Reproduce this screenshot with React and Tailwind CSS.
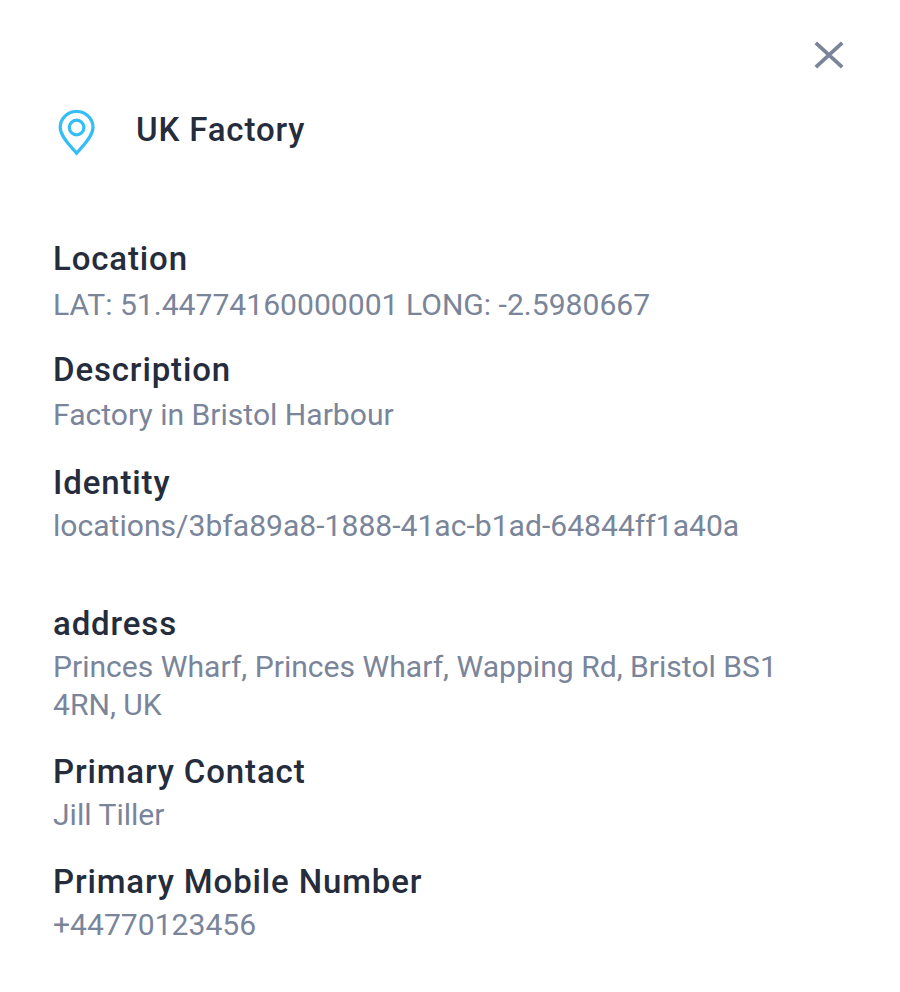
const Title = ({ children, className = "" }) => (
  <h2 className={`text-[33px] leading-[42px] font-medium tracking-[0.86px] whitespace-nowrap text-[#252c3c] ${className}`}>{children}</h2>
);
const Value = ({ children, className = "" }) => (
  <p className={`text-[30.1px] leading-[38px] whitespace-nowrap text-[#7a859a] ${className}`}>{children}</p>
);

export default function App() {
  return (
    <main className="h-[992px] w-[900px] overflow-hidden bg-white pl-[53px] font-['Roboto',sans-serif]">
      <div className="flex h-[109px] justify-end pt-[41px] pr-[56px]">
        <button aria-label="Close" className="h-7 w-[30px]">
          <svg viewBox="0 0 30 28" className="h-7 w-[30px]" fill="none" stroke="#7a8599" strokeWidth="3.8">
            <path d="M1.8 1.8 28.200 26.200M28.200 1.8 1.8 26.200" />
          </svg>
        </button>
      </div>
      <header className="flex h-[129px]">
        <svg viewBox="0 0 38 46" className="mt-px ml-[5px] h-[46px] w-[38px]" fill="none" stroke="#35bdf5" strokeWidth="3.2">
          <path d="M18.600 43.200C14 37.500 2.200 27 2.200 17.500a16.400 16 0 0 1 32.800 0C35 27 23.200 37.500 18.600 43.200Z" />
          <circle cx="18.600" cy="17.500" r="7.300" />
        </svg>
        <Title className="ml-[40px]">UK Factory</Title>
      </header>
      <section className="h-[111px]"><Title>Location</Title><Value className="pt-[6px]">LAT: 51.44774160000001 LONG: -2.5980667</Value></section>
      <section className="h-[113px]"><Title>Description</Title><Value className="pt-[5px]">Factory in Bristol Harbour</Value></section>
      <section className="h-[141px]"><Title>Identity</Title><Value className="pt-[3px]">locations/3bfa89a8-1888-41ac-b1ad-64844ff1a40a</Value></section>
      <section className="h-[148px]"><Title>address</Title><Value className="pt-[3px]">Princes Wharf, Princes Wharf, Wapping Rd, Bristol BS1<br />4RN, UK</Value></section>
      <section className="h-[110px]"><Title>Primary Contact</Title><Value className="pt-[3px]">Jill Tiller</Value></section>
      <section className="h-[110px]"><Title>Primary Mobile Number</Title><Value className="pt-[3px]">+44770123456</Value></section>
    </main>
  );
}
